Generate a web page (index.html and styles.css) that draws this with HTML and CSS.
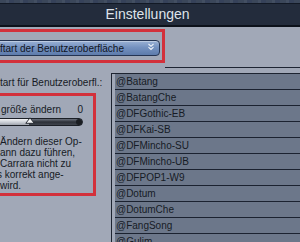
FILE: index.html
```html
<!DOCTYPE html>
<html lang="de">
<head>
  <meta charset="UTF-8" />
  <meta name="viewport" content="width=device-width, initial-scale=1" />
  <title>Einstellungen</title>
  <link rel="stylesheet" href="styles.css">
</head>
<body>
  <header class="titlebar">
    <div class="strip"></div>
    <h1>Einstellungen</h1>
  </header>

  <div class="top">
    <div class="mark mark-select">
      <div class="select">
        <span>ftart der Benutzeroberfläche</span>
        <svg class="chev" width="8" height="8" viewBox="0 0 8 8" aria-hidden="true">
          <path d="M1.5 1 L4 3.3 L6.5 1 M1.5 4.2 L4 6.5 L6.5 4.2" fill="none" stroke="#eef2f8" stroke-width="1.1" />
        </svg>
      </div>
    </div>
    <div class="top-rest"></div>
  </div>

  <div class="main">
    <div class="side">
      <div class="label">tart für Benutzeroberfl.:</div>
      <div class="mark mark-size">
        <div class="size-row"><span>größe ändern</span><span>0</span></div>
        <div class="slider">
          <div class="fill"></div>
          <svg class="thumb" width="10" height="7" viewBox="0 0 10 7" aria-hidden="true">
            <path d="M5 0.8 L9.2 6.3 L0.8 6.3 Z" fill="#f4f5f7" stroke="#2a2e36" stroke-width="1" />
          </svg>
        </div>
        <p class="note">
          <span class="line">Ändern dieser Op-</span>
          <span class="line cut-k">kann dazu führen,</span>
          <span class="line">Carrara nicht zu</span>
          <span class="line cut-s">s korrekt ange-</span>
          <span class="line">wird.</span>
        </p>
      </div>
    </div>

    <ul class="fonts">
      <li>@Batang</li>
      <li>@BatangChe</li>
      <li>@DFGothic-EB</li>
      <li>@DFKai-SB</li>
      <li>@DFMincho-SU</li>
      <li>@DFMincho-UB</li>
      <li>@DFPOP1-W9</li>
      <li>@Dotum</li>
      <li>@DotumChe</li>
      <li>@FangSong</li>
      <li>@Gulim</li>
    </ul>
  </div>
</body>
</html>
```

FILE: styles.css
```css
* {
  box-sizing: border-box;
}
body {
  margin: 0;
  width: 300px;
  height: 242px;
  overflow: hidden;
  background-color: #a1a8b7;
  font-family: 'Liberation Sans', Arial, sans-serif;
  font-size: 10px;
  color: #161b25;
}
.titlebar {
  height: 27px;
}
.strip {
  height: 4px;
  background: repeating-linear-gradient(90deg, #3b475a 0 6px, #434f62 6px 9px, #36425a 9px 14px);
  border-bottom: 1px solid #121925;
}
h1 {
  margin: 0;
  height: 23px;
  line-height: 21px;
  padding-right: 5px;
  text-align: center;
  font-size: 14px;
  font-weight: normal;
  color: #dfe3ea;
  background-color: #232c3c;
  border-bottom: 2px solid #0c111a;
}
.top {
  display: flex;
  height: 41px;
}
.mark {
  border: 3px solid #d3313b;
  margin-left: -10px;
}
.mark-select {
  width: 175px;
  height: 34px;
  margin-top: 2px;
  padding: 8px 2px 0 0;
}
.select {
  display: flex;
  align-items: center;
  justify-content: space-between;
  height: 16px;
  padding: 0 4px 0 6px;
  border: 1px solid #243452;
  border-radius: 4px;
  background: linear-gradient(#9ab1d4, #7592c0 45%, #5d7bab);
  box-shadow: inset 0 1px 0 rgba(255,255,255,0.35);
  color: #10151f;
  white-space: nowrap;
}
.chev {
  margin-top: -3px;
}
.top-rest {
  flex: 1;
  border-bottom: 1px solid #1e2533;
}
.main {
  display: flex;
}
.side {
  width: 111px;
  flex: none;
}
.label {
  margin-top: 9px;
  padding-left: 0;
  line-height: 12px;
  white-space: nowrap;
}
.mark-size {
  width: 106px;
  height: 103px;
  margin-top: 4px;
  padding: 8px 10px 0 0;
}
.size-row {
  display: flex;
  justify-content: space-between;
  line-height: 12px;
  padding-left: 8px;
  white-space: nowrap;
}
.slider {
  position: relative;
  height: 8px;
  margin-top: 2px;
  border: 1px solid #1b1f26;
  border-radius: 4px;
  background: linear-gradient(#6b717c, #2c3038 50%, #3f444d);
}
.fill {
  width: 35px;
  height: 100%;
  border-radius: 3px 0 0 3px;
  background: linear-gradient(#f3f4f6, #c9cdd4 55%, #9ea3ac);
}
.slider::after {
  content: '';
  position: absolute;
  right: 0;
  top: 0;
  width: 6px;
  height: 6px;
  border-radius: 3px;
  background: #1a1d22;
}
.thumb {
  position: absolute;
  left: 31px;
  top: -2px;
}
.note {
  margin: 10px 0 0;
  line-height: 11px;
  white-space: nowrap;
}
.line {
  display: block;
  padding-left: 7px;
}
.line.cut-k {
  padding-left: 2px;
}
.line.cut-s {
  padding-left: 4px;
}
.fonts {
  flex: 1;
  list-style: none;
  margin: 5px 0 0;
  padding: 0 0 0 3px;
  border-top: 1px solid #1d2431;
  border-left: 1px solid #1d2431;
  white-space: nowrap;
}
.fonts li {
  height: 16px;
  line-height: 15px;
  padding-left: 1px;
  background-color: #6c778a;
  border-bottom: 1px solid #1b2230;
}
```
